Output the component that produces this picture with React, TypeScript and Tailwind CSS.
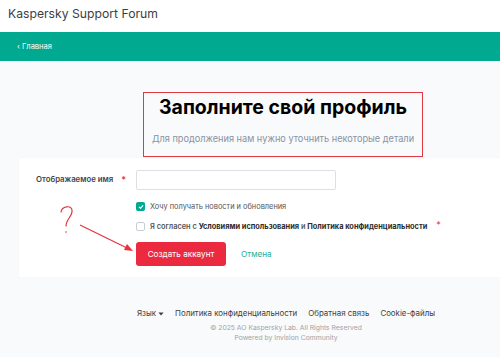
import React from "react";

export default function App() {
  return (
    <div className="w-[500px] h-[357px] overflow-hidden relative bg-[#f8fafb] whitespace-nowrap" style={{ fontFamily: "Inter, 'Noto Sans', sans-serif" }}>
      <div className="w-[570px]">
        <div className="h-[32px] bg-white flex items-center px-[8px]">
          <span className="text-[12.2px] text-[#3d3d3d] leading-none -mt-[3px]">Kaspersky Support Forum</span>
        </div>
        <div className="h-[29px] bg-[#00a98f] flex items-center pl-[17px]">
          <span className="text-[7.5px] text-white leading-none">‹ Главная</span>
        </div>
        <div className="flex justify-center pt-[31px]">
          <div className="w-[280px] h-[65px] border-[1.5px] border-[#e2383f] flex flex-col items-center ml-[-4px]">
            <div className="text-[19.5px] font-bold text-black leading-none mt-[5px]">Заполните свой профиль</div>
            <div className="text-[9.2px] text-[#8992a3] leading-none mt-[16px]">Для продолжения нам нужно уточнить некоторые детали</div>
          </div>
        </div>
        <div className="mx-[19px] mt-[1px] bg-white h-[119px] pt-[12px] pl-[17px] shadow-[0_0_1px_rgba(0,0,0,0.06)]">
          <div className="flex items-center">
            <div className="w-[100px] flex items-center text-[7.8px] font-semibold text-[#444]">
              <span>Отображаемое имя</span>
              <span className="text-[#e2383f] ml-[8px] text-[9px]">*</span>
            </div>
            <div className="w-[200px] h-[20px] border border-[#dcdfe4] rounded-[2px] bg-white" />
          </div>
          <div className="ml-[100px] mt-[12px] flex items-center h-[9px]">
            <div className="w-[9px] h-[9px] rounded-[2px] bg-[#00a98f] flex items-center justify-center">
              <svg width="6" height="6" viewBox="0 0 10 10"><path d="M2 5.2 L4.2 7.2 L8 2.8" stroke="white" strokeWidth="1.8" fill="none" strokeLinecap="round" strokeLinejoin="round" /></svg>
            </div>
            <span className="ml-[5px] text-[7.4px] text-[#555]">Хочу получать новости и обновления</span>
          </div>
          <div className="ml-[100px] mt-[11px] flex items-center h-[9px]">
            <div className="w-[9px] h-[9px] rounded-[2px] border border-[#c9ced6] bg-white" />
            <span className="ml-[5px] text-[7.4px] font-semibold text-[#555]">Я согласен с <span className="font-bold text-[#2b2b2b]">Условиями использования</span> и <span className="font-bold text-[#2b2b2b]">Политика конфиденциальности</span></span>
            <span className="ml-[9px] text-[#e2383f] text-[9px] -mt-[3px]">*</span>
          </div>
          <div className="ml-[100px] mt-[11px] flex items-center">
            <div className="w-[90px] h-[24px] bg-[#ec2a3f] rounded-[3px] flex items-center justify-center">
              <span className="text-white text-[8.2px]">Создать аккаунт</span>
            </div>
            <span className="ml-[15px] text-[8.2px] text-[#26ae97]">Отмена</span>
          </div>
        </div>
        <div className="mt-[33px] flex justify-center gap-[11px] text-[7.9px] text-[#404040] leading-none ml-[2px]">
          <span className="flex items-center">Язык <svg className="ml-[2px]" width="6" height="4" viewBox="0 0 8 5"><path d="M0.5 0.5 L7.5 0.5 L4 4.5 Z" fill="#404040" /></svg></span>
          <span>Политика конфиденциальности</span>
          <span>Обратная связь</span>
          <span>Cookie-файлы</span>
        </div>
        <div className="text-center text-[6.8px] text-[#a3a3a3] mt-[5px] leading-[10px] ml-[2px]">© 2025 AO Kaspersky Lab. All Rights Reserved</div>
        <div className="text-center text-[6.8px] text-[#a3a3a3] leading-[10px] ml-[2px]">Powered by Invision Community</div>
      </div>
      <svg className="absolute left-0 top-0 pointer-events-none" width="500" height="357">
        <path d="M61 212 C 62 206, 71 205, 72 210 C 73 216, 66 219, 66 226" stroke="#e8323d" strokeWidth="1.2" fill="none" strokeLinecap="round" />
        <circle cx="66" cy="232" r="0.8" fill="#e8323d" />
        <line x1="80" y1="225" x2="127" y2="248" stroke="#e8323d" strokeWidth="1.2" />
        <path d="M133 251 L124 250 L127 244 Z" fill="#e8323d" />
      </svg>
    </div>
  );
}
